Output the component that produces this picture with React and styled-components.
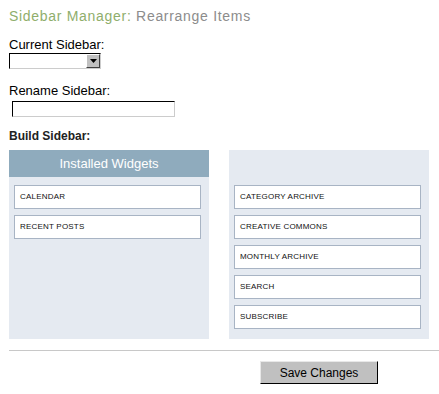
import React from "react";
import styled, { createGlobalStyle } from "styled-components";

const installed = ["CALENDAR", "RECENT POSTS"];
const active = [
  "CATEGORY ARCHIVE",
  "CREATIVE COMMONS",
  "MONTHLY ARCHIVE",
  "SEARCH",
  "SUBSCRIBE",
];

export default function App() {
  return (
    <Page>
      <GlobalStyle />
      <Title>
        <span className="accent">Sidebar Manager:</span> Rearrange Items
      </Title>
      <Field>
        <Label>Current Sidebar:</Label>
        <Select>
          <span className="arrow">
            <svg width="7" height="4" viewBox="0 0 7 4">
              <path d="M0 0h7L3.5 4z" fill="#000" />
            </svg>
          </span>
        </Select>
      </Field>
      <Field>
        <Label>Rename Sidebar:</Label>
        <TextInput type="text" />
      </Field>
      <Heading>Build Sidebar:</Heading>
      <Columns>
        <Panel>
          <PanelHead>Installed Widgets</PanelHead>
          <ItemList>
            {installed.map((w) => (
              <Item key={w}>{w}</Item>
            ))}
          </ItemList>
        </Panel>
        <Panel>
          <PanelHead $blank />
          <ItemList>
            {active.map((w) => (
              <Item key={w}>{w}</Item>
            ))}
          </ItemList>
        </Panel>
      </Columns>
      <Rule />
      <Footer>
        <SaveButton>Save Changes</SaveButton>
      </Footer>
    </Page>
  );
}

const GlobalStyle = createGlobalStyle`
  body {
    margin: 0;
    background: #fff;
    font-family: "Liberation Sans", Arial, sans-serif;
    color: #000;
  }
`;

const Page = styled.div`
  padding: 8px 0 0 9px;
  width: 430px;
`;

const Title = styled.h1`
  margin: 0 0 13px;
  font-size: 14px;
  font-weight: normal;
  letter-spacing: 0.7px;
  color: #8c8c8c;
  line-height: 16px;
  .accent {
    color: #8fae6c;
  }
`;

const Field = styled.div`
  display: flex;
  flex-direction: column;
  align-items: flex-start;
  margin-bottom: 14px;
`;

const Label = styled.div`
  font-size: 13px;
  line-height: 15px;
  margin-bottom: 1px;
`;

const Select = styled.div`
  box-sizing: border-box;
  width: 92px;
  height: 16px;
  border: 1px solid;
  border-color: #000 #ccc #ccc #000;
  background: #fff;
  display: flex;
  justify-content: flex-end;
  .arrow {
    box-sizing: border-box;
    width: 14px;
    height: 14px;
    background: #c0c0c0;
    border: 1px solid;
    border-color: #fff #404040 #404040 #fff;
    display: flex;
    align-items: center;
    justify-content: center;
  }
`;

const TextInput = styled.input`
  box-sizing: border-box;
  width: 163px;
  height: 16px;
  margin: 2px 0 0 3px;
  padding: 0;
  border: 1px solid;
  border-color: #000 #ccc #ccc #000;
`;

const Heading = styled.h2`
  margin: -2px 0 7px;
  font-size: 12px;
  font-weight: bold;
  line-height: 14px;
  color: #222;
`;

const Columns = styled.div`
  display: grid;
  grid-template-columns: 200px 200px;
  column-gap: 20px;
`;

const Panel = styled.div`
  background: #e5eaf1;
  height: 189px;
`;

const PanelHead = styled.div`
  height: 27px;
  background: ${(p) => (p.$blank ? "transparent" : "#8fabbd")};
  color: #fff;
  font-size: 13px;
  line-height: 27px;
  text-align: center;
`;

const ItemList = styled.div`
  display: flex;
  flex-direction: column;
  gap: 6px;
  padding: 8px 8px 0 5px;
`;

const Item = styled.div`
  box-sizing: border-box;
  height: 24px;
  background: #fff;
  border: 1px solid #a8b4c4;
  font-size: 8px;
  letter-spacing: 0.2px;
  line-height: 22px;
  padding-left: 5px;
  color: #111;
`;

const Rule = styled.hr`
  margin: 11px 0 0;
  border: 0;
  border-top: 1px solid #c8c8c8;
`;

const Footer = styled.div`
  display: flex;
  padding: 10px 0 0 251px;
`;

const SaveButton = styled.button`
  box-sizing: border-box;
  width: 118px;
  height: 23px;
  background: #c0c0c0;
  border: 1px solid;
  border-color: #e8e8e8 #000 #000 #e8e8e8;
  font-family: "Liberation Sans", Arial, sans-serif;
  font-size: 12px;
  padding: 0;
  color: #000;
`;
